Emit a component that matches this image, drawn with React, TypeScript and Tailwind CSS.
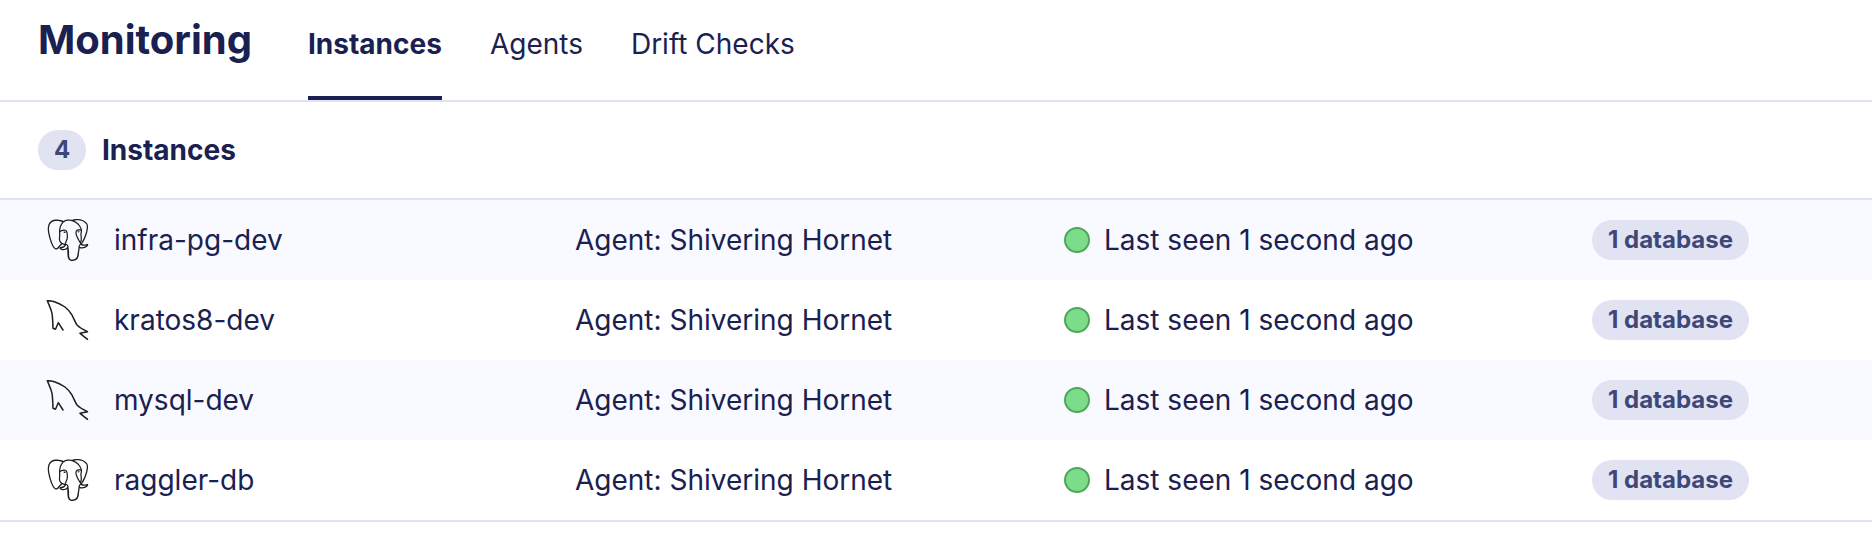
import React from 'react';
import { SiPostgresql } from 'react-icons/si';

const instances = [
  { name: 'infra-pg-dev', engine: 'postgres' },
  { name: 'kratos8-dev', engine: 'mysql' },
  { name: 'mysql-dev', engine: 'mysql' },
  { name: 'raggler-db', engine: 'postgres' },
];

const DolphinIcon = () => (
  <svg viewBox="46 298 44 44" className="w-[44px] h-[44px]" fill="none" stroke="#1c1c22" strokeWidth="1.5" strokeLinejoin="round" strokeLinecap="round">
    <path d="M63 330L58.300 322.700L55.500 329.300L53 328.300C52.700 323 52.800 318 52 313.300C51 308.500 49 305 47.300 300.700C50 300.300 52.500 301.200 55 302C59 303.200 62 305 65 307C68 309.200 70 312 72 315C74 319 75 322 77 325C80 328 84 330 87.500 331.700L80 333.300L87.500 339.300" />
  </svg>
);

const App = () => {
  return (
    <div className="w-[1872px] h-[544px] bg-white text-[#1a2151] font-['Inter',sans-serif] overflow-hidden">
      <header className="h-[102px] flex items-start pl-[38px] border-b-2 border-[#e1e3f3]">
        <h1 className="text-[40px] leading-[80px] font-bold w-[270px]">Monitoring</h1>
        <nav className="flex gap-[48px] h-[100px]">
          <a className="h-full pt-[24px] text-[28px] leading-[40px] font-bold border-b-[4px] border-[#1a2151]">Instances</a>
          <a className="h-full pt-[24px] text-[28px] leading-[40px]">Agents</a>
          <a className="h-full pt-[24px] text-[28px] leading-[40px]">Drift Checks</a>
        </nav>
      </header>

      <div className="h-[98px] flex items-center pl-[38px] gap-[16px] border-b-2 border-[#e1e3f3]">
        <span className="w-[48px] h-[40px] rounded-full bg-[#e1e3f3] text-[#3f4779] text-[24px] font-bold flex items-center justify-center">4</span>
        <span className="text-[28px] font-bold">Instances</span>
      </div>

      <div className="border-b-2 border-[#e1e3f3]">
        {instances.map((item, i) => (
          <div key={item.name} className={`h-[80px] flex items-center pl-[46px] text-[28px] ${i % 2 === 0 ? 'bg-[#f9faff]' : 'bg-white'}`}>
            <div className="w-[68px] shrink-0">
              {item.engine === 'postgres' ? <SiPostgresql className="w-[42px] h-[44px] ml-[1px] text-[#1c1c22]" /> : <DolphinIcon />}
            </div>
            <div className="w-[461px] shrink-0">{item.name}</div>
            <div className="w-[489px] shrink-0">Agent: Shivering Hornet</div>
            <div className="w-[528px] shrink-0 flex items-center gap-[14px]">
              <span className="w-[26px] h-[26px] rounded-full bg-[#7bdc89] border-2 border-[#4ea65c]" />
              <span>Last seen 1 second ago</span>
            </div>
            <span className="w-[157px] h-[40px] rounded-full bg-[#e1e3f3] text-[#3f4779] text-[24px] font-bold flex items-center justify-center">1 database</span>
          </div>
        ))}
      </div>
    </div>
  );
};

export default App;
